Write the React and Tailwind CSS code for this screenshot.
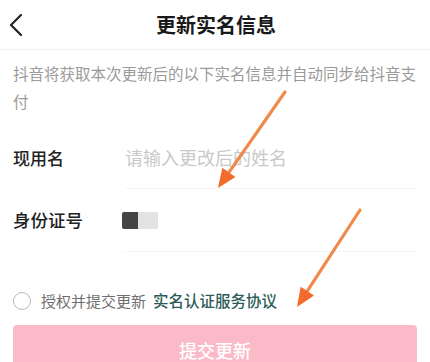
import React from "react";

const FONT = { fontFamily: '"Noto Sans CJK SC", "Noto Sans", sans-serif' };

function Arrow({ x1, y1, x2, y2 }) {
    // straight line with a triangular head at (x2, y2)
    const dx = x2 - x1
    const dy = y2 - y1
    const len = Math.hypot(dx, dy)
    const ux = dx / len
    const uy = dy / len
    const bx = x2 - ux * 19
    const by = y2 - uy * 19
    const nx = -uy * 8
    const ny = ux * 8
    return (
        <g>
            <line x1={x1} y1={y1} x2={bx + ux * 2} y2={by + uy * 2} stroke="#f08a4b" strokeWidth="3.2" strokeLinecap="round" />
            <polygon points={`${x2},${y2} ${bx + nx},${by + ny} ${bx - nx},${by - ny}`} fill="#f26a2c" />
        </g>
    )
}

export default function App() {
    return (
        <div className="relative w-[430px] h-[362px] overflow-hidden bg-white" style={FONT}>
            {/* header */}
            <div className="relative h-[50px] flex items-center justify-center border-b border-[#f1f1f1]">
                <svg className="absolute left-[8px] top-[13px]" width="16" height="24" viewBox="0 0 16 24">
                    <path d="M13 2 L3 12 L13 22" fill="none" stroke="#222" strokeWidth="2.2" strokeLinecap="round" strokeLinejoin="round" />
                </svg>
                <span className="ml-[2px] text-[20px] font-bold text-[#1a1a1a]">更新实名信息</span>
            </div>

            {/* description */}
            <p className="px-[13px] pt-[9px] text-[15.5px] leading-[28px] text-[#9b9b9b] whitespace-nowrap">
                抖音将获取本次更新后的以下实名信息并自动同步给抖音支
                <br />
                付
            </p>

            {/* fields */}
            <div className="mt-[11px]">
                <div className="flex items-center h-[63px] pl-[13px]">
                    <span className="w-[112px] text-[17px] font-medium text-[#222]">现用名</span>
                    <div className="flex-1 h-full flex items-center border-b border-[#f5f5f5] mr-[13px]">
                        <span className="text-[18px] text-[#c9c9c9]">请输入更改后的姓名</span>
                    </div>
                </div>
                <div className="flex items-center h-[63px] pl-[13px]">
                    <span className="w-[109px] text-[17.5px] font-medium text-[#222]">身份证号</span>
                    <div className="flex-1 h-full flex items-center border-b border-[#f6f6f6] mr-[13px]">
                        <div className="w-[16px] h-[17px] bg-[#444] rounded-l-[2px]" />
                        <div className="w-[20px] h-[17px] bg-[#e3e3e3]" />
                    </div>
                </div>
            </div>

            {/* agreement */}
            <div className="flex items-center mt-[39px] pl-[13px] h-[20px]">
                <div className="w-[18px] h-[18px] rounded-full border-[1.5px] border-[#b9b9b9]" />
                <span className="ml-[10px] text-[15px] text-[#6f6f6f]">授权并提交更新</span>
                <span className="ml-[7px] text-[15.5px] font-medium text-[#2c5d58]">实名认证服务协议</span>
            </div>

            {/* submit */}
            <div className="px-[13px] mt-[14px]">
                <button className="w-full h-[50px] rounded-[4px] bg-[#fbbac8] text-white text-[18px] font-medium">
                    提交更新
                </button>
            </div>

            {/* annotation arrows */}
            <svg className="absolute inset-0 pointer-events-none" width="430" height="362">
                <Arrow x1={285} y1={92} x2={218} y2={188} />
                <Arrow x1={360} y1={210} x2={297} y2={307} />
            </svg>
        </div>
    )
}
